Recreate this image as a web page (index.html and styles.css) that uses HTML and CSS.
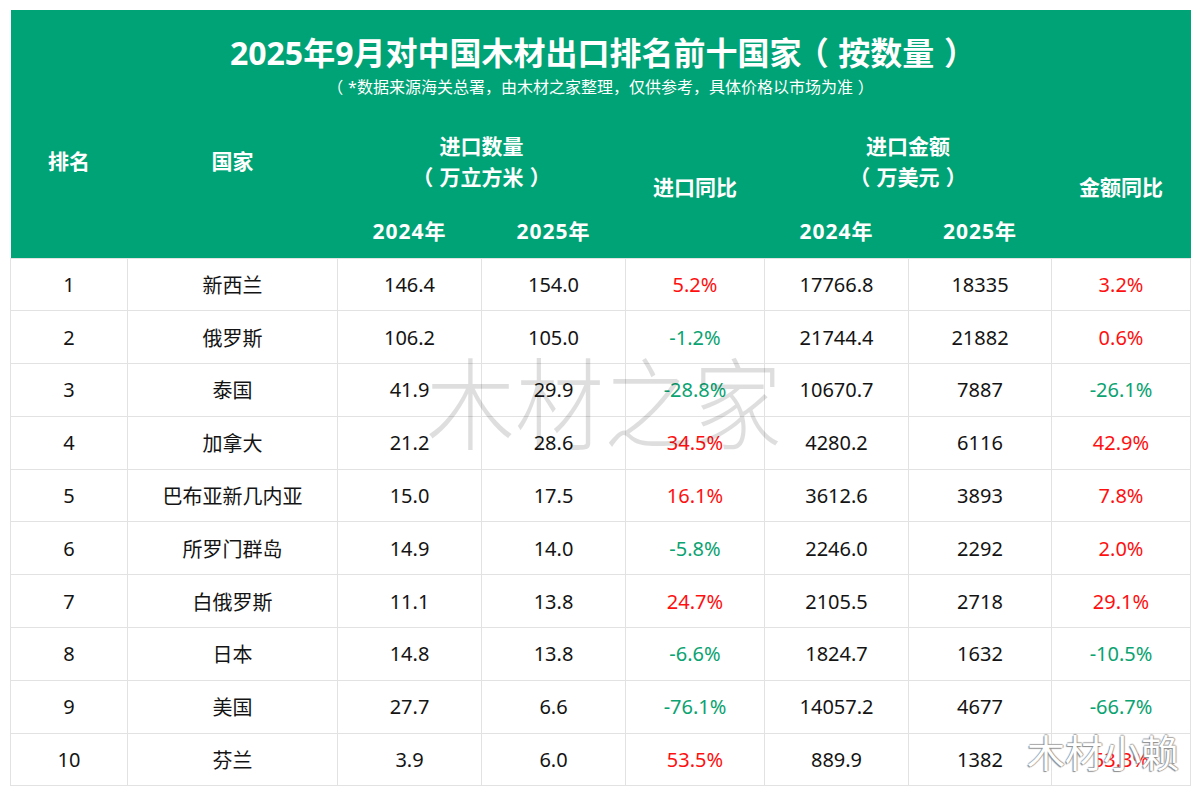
FILE: index.html
```html
<!DOCTYPE html>
<html lang="zh">
<head>
<meta charset="utf-8">
<title>2025年9月对中国木材出口排名前十国家</title>
<link rel="stylesheet" href="styles.css">
</head>
<body>
<div class="wrap">
<table class="rank">
<colgroup>
<col class="c1"><col class="c2"><col class="c3"><col class="c4"><col class="c5"><col class="c6"><col class="c7"><col class="c8">
</colgroup>
<thead>
<tr class="h-title">
<th colspan="8">
<div class="title">2025年9月对中国木材出口排名前十国家<span class="po">（</span>按数量<span class="pc">）</span></div>
<div class="sub"><span class="po">（</span>*数据来源海关总署，由木材之家整理，仅供参考，具体价格以市场为准<span class="pc">）</span></div>
</th>
</tr>
<tr class="h-1">
<th>排名</th>
<th>国家</th>
<th colspan="2">进口数量<br><span class="po">（</span>万立方米<span class="pc">）</span></th>
<th rowspan="2" class="mid">进口同比</th>
<th colspan="2">进口金额<br><span class="po">（</span>万美元<span class="pc">）</span></th>
<th rowspan="2" class="mid">金额同比</th>
</tr>
<tr class="h-2">
<th></th>
<th></th>
<th class="yr">2024年</th>
<th class="yr">2025年</th>
<th class="yr">2024年</th>
<th class="yr">2025年</th>
</tr>
</thead>
<tbody>
<tr><td>1</td><td>新西兰</td><td>146.4</td><td>154.0</td><td class="up">5.2%</td><td>17766.8</td><td>18335</td><td class="up">3.2%</td></tr>
<tr><td>2</td><td>俄罗斯</td><td>106.2</td><td>105.0</td><td class="down">-1.2%</td><td>21744.4</td><td>21882</td><td class="up">0.6%</td></tr>
<tr><td>3</td><td>泰国</td><td>41.9</td><td>29.9</td><td class="down">-28.8%</td><td>10670.7</td><td>7887</td><td class="down">-26.1%</td></tr>
<tr><td>4</td><td>加拿大</td><td>21.2</td><td>28.6</td><td class="up">34.5%</td><td>4280.2</td><td>6116</td><td class="up">42.9%</td></tr>
<tr><td>5</td><td>巴布亚新几内亚</td><td>15.0</td><td>17.5</td><td class="up">16.1%</td><td>3612.6</td><td>3893</td><td class="up">7.8%</td></tr>
<tr><td>6</td><td>所罗门群岛</td><td>14.9</td><td>14.0</td><td class="down">-5.8%</td><td>2246.0</td><td>2292</td><td class="up">2.0%</td></tr>
<tr><td>7</td><td>白俄罗斯</td><td>11.1</td><td>13.8</td><td class="up">24.7%</td><td>2105.5</td><td>2718</td><td class="up">29.1%</td></tr>
<tr><td>8</td><td>日本</td><td>14.8</td><td>13.8</td><td class="down">-6.6%</td><td>1824.7</td><td>1632</td><td class="down">-10.5%</td></tr>
<tr><td>9</td><td>美国</td><td>27.7</td><td>6.6</td><td class="down">-76.1%</td><td>14057.2</td><td>4677</td><td class="down">-66.7%</td></tr>
<tr><td>10</td><td>芬兰</td><td>3.9</td><td>6.0</td><td class="up">53.5%</td><td>889.9</td><td>1382</td><td class="up">53.3%</td></tr>
</tbody>
</table>
<div class="wm-center">木材之家</div>
<div class="wm-corner">木材小赖</div>
</div>
</body>
</html>
```

FILE: styles.css
```css
html, body {
  margin: 0;
  padding: 0;
  background: #ffffff;
}
body {
  font-family: "Noto Sans", "Noto Sans CJK SC", sans-serif;
}
.wrap {
  position: relative;
  width: 1200px;
  height: 797px;
  padding: 10px;
  box-sizing: border-box;
}
.rank {
  border-collapse: collapse;
  table-layout: fixed;
  width: 1180px;
}
.c1 { width: 117px; }
.c2 { width: 210px; }
.c3 { width: 144px; }
.c4 { width: 144px; }
.c5 { width: 139px; }
.c6 { width: 144px; }
.c7 { width: 143px; }
.c8 { width: 139px; }
.po {
  display: inline-block;
  margin-left: -0.15em;
  margin-right: 0.3em;
}
.pc {
  display: inline-block;
  margin-left: 0.3em;
  margin-right: -0.15em;
}
.rank thead th {
  background: #00a376;
  color: #ffffff;
  font-weight: 700;
  font-size: 21px;
  padding: 0;
  text-align: center;
  vertical-align: middle;
  line-height: 31px;
  border: none;
}
.rank thead th.yr {
  letter-spacing: 1px;
}
.h-title { height: 108px; }
.h-1 { height: 87px; }
.h-2 { height: 53px; }
.title {
  font-size: 32px;
  line-height: 44px;
  font-weight: 700;
}
.sub {
  font-size: 16px;
  font-weight: 400;
  line-height: 22px;
  padding-top: 1px;
}
.h-2 th {
  padding-bottom: 2px;
}
.rank tbody td {
  height: 51.8px;
  padding: 0;
  border: 1px solid #e2e2e2;
  text-align: center;
  vertical-align: middle;
  font-size: 20px;
  color: #141414;
}
.rank tbody td.up { color: #ff1010; }
.rank tbody td.down { color: #0aa371; }
.wm-center {
  position: absolute;
  left: 426px;
  top: 330px;
  font-size: 89px;
  line-height: 130px;
  font-weight: 300;
  color: rgba(0, 0, 0, 0.13);
  white-space: nowrap;
  transform: scaleY(1.13);
  transform-origin: left top;
  pointer-events: none;
}
.wm-corner {
  position: absolute;
  left: 1027px;
  top: 726px;
  font-size: 38px;
  line-height: 52px;
  color: #ffffff;
  white-space: nowrap;
  text-shadow: -1px 1px 1px #8a8a8a, 1px 0 1px #a0a0a0, 0 -1px 1px #a8a8a8;
  pointer-events: none;
}
```
